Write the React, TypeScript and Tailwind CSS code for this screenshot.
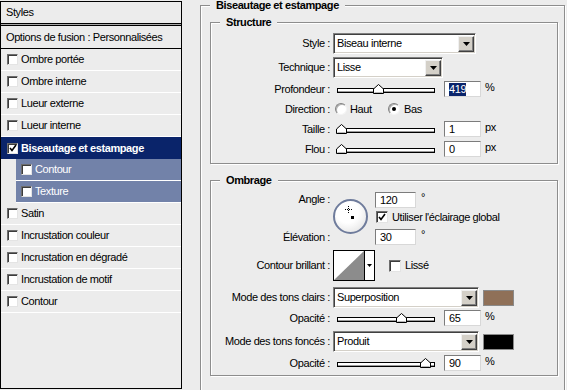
import React from "react";

const etched =
  "border border-[#8d8d8d] shadow-[inset_1px_1px_0_#ffffff,1px_1px_0_#ffffff]";
const sunken =
  "border border-t-[#808080] border-l-[#808080] border-b-white border-r-white shadow-[inset_1px_1px_0_#404040,inset_-1px_-1px_0_#d4d0c8]";
const field =
  "border border-t-[#7c7c7c] border-l-[#7c7c7c] border-b-[#d8d8d8] border-r-[#d8d8d8] bg-white";

function CheckBox({ checked, className }: { checked?: boolean; className: string }) {
  return (
    <div
      className={`${className} shrink-0 bg-white flex items-center justify-center border border-t-[#6d6d6d] border-l-[#6d6d6d] border-b-[#e4e4e4] border-r-[#e4e4e4] shadow-[inset_1px_1px_0_#3c3c3c]`}
    >
      {checked && (
        <svg width="8" height="8" viewBox="0 0 8 8">
          <path d="M1 4l2 2.5L7 1" fill="none" stroke="#000" strokeWidth="1.6" />
        </svg>
      )}
    </div>
  );
}

function Radio({ checked }: { checked?: boolean }) {
  return (
    <div className="w-[12px] h-[12px] shrink-0 rounded-full bg-white border border-t-[#808080] border-l-[#808080] border-b-[#f4f4f4] border-r-[#f4f4f4] shadow-[inset_1px_1px_0_#b0b0b0] flex items-center justify-center">
      {checked && <div className="w-[4px] h-[4px] rounded-full bg-black" />}
    </div>
  );
}

function Arrow() {
  return (
    <svg width="7" height="4" viewBox="0 0 7 4">
      <path d="M0 0h7L3.5 4z" fill="#000" />
    </svg>
  );
}

function Select({ value, width }: { value: string; width: string }) {
  return (
    <div className={`${width} h-[21px] ${sunken} bg-white flex items-center`}>
      <span className="pl-[3px] flex-1">{value}</span>
      <div className="w-[16px] h-[16px] mr-[1px] bg-[#d4d0c8] border border-t-[#f0f0f0] border-l-[#f0f0f0] border-b-[#404040] border-r-[#404040] shadow-[inset_-1px_-1px_0_#808080] flex items-center justify-center">
        <Arrow />
      </div>
    </div>
  );
}

function Input({ value, width = "w-[37px]", selected }: { value: string; width?: string; selected?: boolean }) {
  return (
    <div className={`${width} h-[16px] ${field} flex items-center pl-[4px] leading-[13px]`}>
      {selected ? <span className="bg-[#0a246a] text-white">{value}</span> : value}
    </div>
  );
}

function Slider({ pos }: { pos: number }) {
  return (
    <div className="relative w-[105px] h-[16px] shrink-0">
      <div className="absolute left-[4px] top-[7px] w-[98px] h-[5px] border border-black bg-white shadow-[inset_0_-1px_0_#9a9a9a]" />
      <svg
        className="absolute top-[3px]"
        style={{ left: pos - 5 }}
        width="11"
        height="10"
        viewBox="0 0 11 10"
      >
        <path d="M0.5 9.5V5L5.5 0.5L10.5 5V9.5Z" fill="#fff" stroke="#000" />
        <path d="M1.5 8.5h8" stroke="#b8b8b8" />
      </svg>
    </div>
  );
}

function Row({ label, mt, h, children }: { label: string; mt: string; h: string; children: React.ReactNode }) {
  return (
    <div className={`flex items-center ${mt} ${h}`}>
      <div className="w-[119px] text-right whitespace-nowrap">{label}</div>
      <div className="ml-[3px] flex items-center">{children}</div>
    </div>
  );
}

function SliderRow({ label, mt, pos, value, unit, selected }: { label: string; mt: string; pos: number; value: string; unit: string; selected?: boolean }) {
  return (
    <Row label={label} mt={mt} h="h-[16px]">
      <Slider pos={pos} />
      <div className="ml-[6px]">
        <Input value={value} selected={selected} />
      </div>
      <span className="ml-[4px] self-start leading-[13px]">{unit}</span>
    </Row>
  );
}

const layers = [
  { name: "Ombre portée" },
  { name: "Ombre interne" },
  { name: "Lueur externe" },
  { name: "Lueur interne" },
  { name: "Biseautage et estampage", selected: true },
  { name: "Contour", sub: true },
  { name: "Texture", sub: true },
  { name: "Satin" },
  { name: "Incrustation couleur" },
  { name: "Incrustation en dégradé" },
  { name: "Incrustation de motif" },
  { name: "Contour" },
];

function StylesPanel() {
  return (
    <div className="mt-px w-[182px] h-[388px] shrink-0 border border-black flex flex-col bg-[#ececec]">
      <div className="h-[21px] pl-[5px] flex items-center">Styles</div>
      <div className="h-[3px] border-y border-black bg-[#a8a8a8]" />
      <div className="h-[23px] pl-[5px] flex items-center border-b border-black">
        Options de fusion : Personnalisées
      </div>
      {layers.map((l, i) =>
        l.selected ? (
          <div key={i} className="h-[22px] pl-[6px] flex items-center bg-[#0a246a] text-white font-bold">
            <CheckBox checked className="w-[11px] h-[11px]" />
            <span className="ml-[3px]">{l.name}</span>
          </div>
        ) : l.sub ? (
          <div key={i} className="h-[22px] ml-[15px] pl-[5px] flex items-center bg-[#7282a9] text-white border-b border-white">
            <CheckBox className="w-[11px] h-[11px]" />
            <span className="ml-[3px]">{l.name}</span>
          </div>
        ) : (
          <div key={i} className="h-[22px] pl-[6px] flex items-center border-b border-white">
            <CheckBox className="w-[11px] h-[11px]" />
            <span className="ml-[3px]">{l.name}</span>
          </div>
        )
      )}
    </div>
  );
}

function GroupTitle({ children }: { children: React.ReactNode }) {
  return (
    <div className="absolute top-[-7px] left-[9px] px-[6px] bg-[#ececec] font-bold leading-[13px]">
      {children}
    </div>
  );
}

function AngleDial() {
  return (
    <div className="ml-[3px] mt-[7px] relative w-[35px] h-[35px] shrink-0 rounded-full border-2 border-[#6f7c9c] bg-[radial-gradient(circle_at_40%_35%,#ffffff_40%,#dcdcdc_100%)]">
      <svg className="absolute left-[10px] top-[5px]" width="7" height="7" viewBox="0 0 7 7">
        <rect x="3" y="0" width="1" height="1" fill="#000" />
        <rect x="3" y="2" width="1" height="1" fill="#000" />
        <rect x="3" y="4" width="1" height="1" fill="#000" />
        <rect x="3" y="6" width="1" height="1" fill="#000" />
        <rect x="0" y="3" width="1" height="1" fill="#000" />
        <rect x="2" y="3" width="1" height="1" fill="#000" />
        <rect x="4" y="3" width="1" height="1" fill="#000" />
        <rect x="6" y="3" width="1" height="1" fill="#000" />
      </svg>
      <div className="absolute left-[16px] top-[15px] w-[3px] h-[3px] bg-black" />
    </div>
  );
}

function ContourPicker() {
  return (
    <div className="w-[42px] h-[31px] border border-black flex bg-white">
      <svg width="30" height="29" viewBox="0 0 30 29" className="shrink-0">
        <path d="M0 29L30 0V29Z" fill="#8c8c8c" />
      </svg>
      <div className="w-[10px] border-l border-black flex items-center justify-center">
        <svg width="5" height="3" viewBox="0 0 5 3">
          <path d="M0 0h5L2.5 3z" fill="#000" />
        </svg>
      </div>
    </div>
  );
}

export default function App() {
  return (
    <div className="w-[567px] h-[390px] overflow-hidden bg-[#ececec] flex text-[11px] leading-[13px] tracking-[-0.4px] text-black font-['Tahoma','Liberation_Sans',sans-serif]">
      <StylesPanel />

      <div className="ml-[18px] pt-[5px]">
        <div className={`relative w-[365px] h-[400px] ${etched}`}>
          <GroupTitle>Biseautage et estampage</GroupTitle>

          {/* Structure */}
          <div className={`relative ml-[9px] mt-[16px] w-[348px] h-[142px] ${etched}`}>
            <GroupTitle>Structure</GroupTitle>
            <Row label="Style :" mt="mt-[10px]" h="h-[21px]">
              <Select value="Biseau interne" width="w-[143px]" />
            </Row>
            <Row label="Technique :" mt="mt-[3px]" h="h-[21px]">
              <Select value="Lisse" width="w-[110px]" />
            </Row>
            <SliderRow label="Profondeur :" mt="mt-[3px]" pos={45} value="419" unit="%" selected />
            <Row label="Direction :" mt="mt-[4px]" h="h-[16px]">
              <div className="w-[53px] ml-[2px] flex items-center">
                <Radio />
                <span className="ml-[3px]">Haut</span>
              </div>
              <Radio checked />
              <span className="ml-[4px]">Bas</span>
            </Row>
            <SliderRow label="Taille :" mt="mt-[4px]" pos={8} value="1" unit="px" />
            <SliderRow label="Flou :" mt="mt-[4px]" pos={8} value="0" unit="px" />
          </div>

          {/* Ombrage */}
          <div className={`relative ml-[9px] mt-[16px] w-[348px] h-[196px] ${etched}`}>
            <GroupTitle>Ombrage</GroupTitle>
            <div className="flex mt-[11px]">
              <div className="w-[119px] h-[52px] flex flex-col justify-between text-right">
                <div className="mt-[1px]">Angle :</div>
                <div>Élévation :</div>
              </div>
              <AngleDial />
              <div className="ml-[7px] flex flex-col">
                <div className="flex">
                  <Input value="120" width="w-[41px]" />
                  <span className="ml-[5px] leading-[10px]">°</span>
                </div>
                <div className="mt-[3px] flex items-center h-[12px]">
                  <CheckBox checked className="ml-[1px] w-[12px] h-[12px]" />
                  <span className="ml-[4px] whitespace-nowrap">Utiliser l'éclairage global</span>
                </div>
                <div className="mt-[6px] flex">
                  <Input value="30" width="w-[41px]" />
                  <span className="ml-[5px] leading-[10px]">°</span>
                </div>
              </div>
            </div>

            <Row label="Contour brillant :" mt="mt-[5px]" h="h-[31px]">
              <ContourPicker />
              <CheckBox className="ml-[14px] w-[12px] h-[12px]" />
              <span className="ml-[4px]">Lissé</span>
            </Row>

            <Row label="Mode des tons clairs :" mt="mt-[6px]" h="h-[21px]">
              <Select value="Superposition" width="w-[146px]" />
              <div className="ml-[4px] w-[31px] h-[16px] border border-[#8a8a8a] bg-[#8f7058]" />
            </Row>
            <SliderRow label="Opacité :" mt="mt-[2px]" pos={68} value="65" unit="%" />
            <Row label="Mode des tons foncés :" mt="mt-[5px]" h="h-[21px]">
              <Select value="Produit" width="w-[146px]" />
              <div className="ml-[4px] w-[31px] h-[16px] border border-[#8a8a8a] bg-black" />
            </Row>
            <SliderRow label="Opacité :" mt="mt-[3px]" pos={92} value="90" unit="%" />
          </div>
        </div>
      </div>
    </div>
  );
}
